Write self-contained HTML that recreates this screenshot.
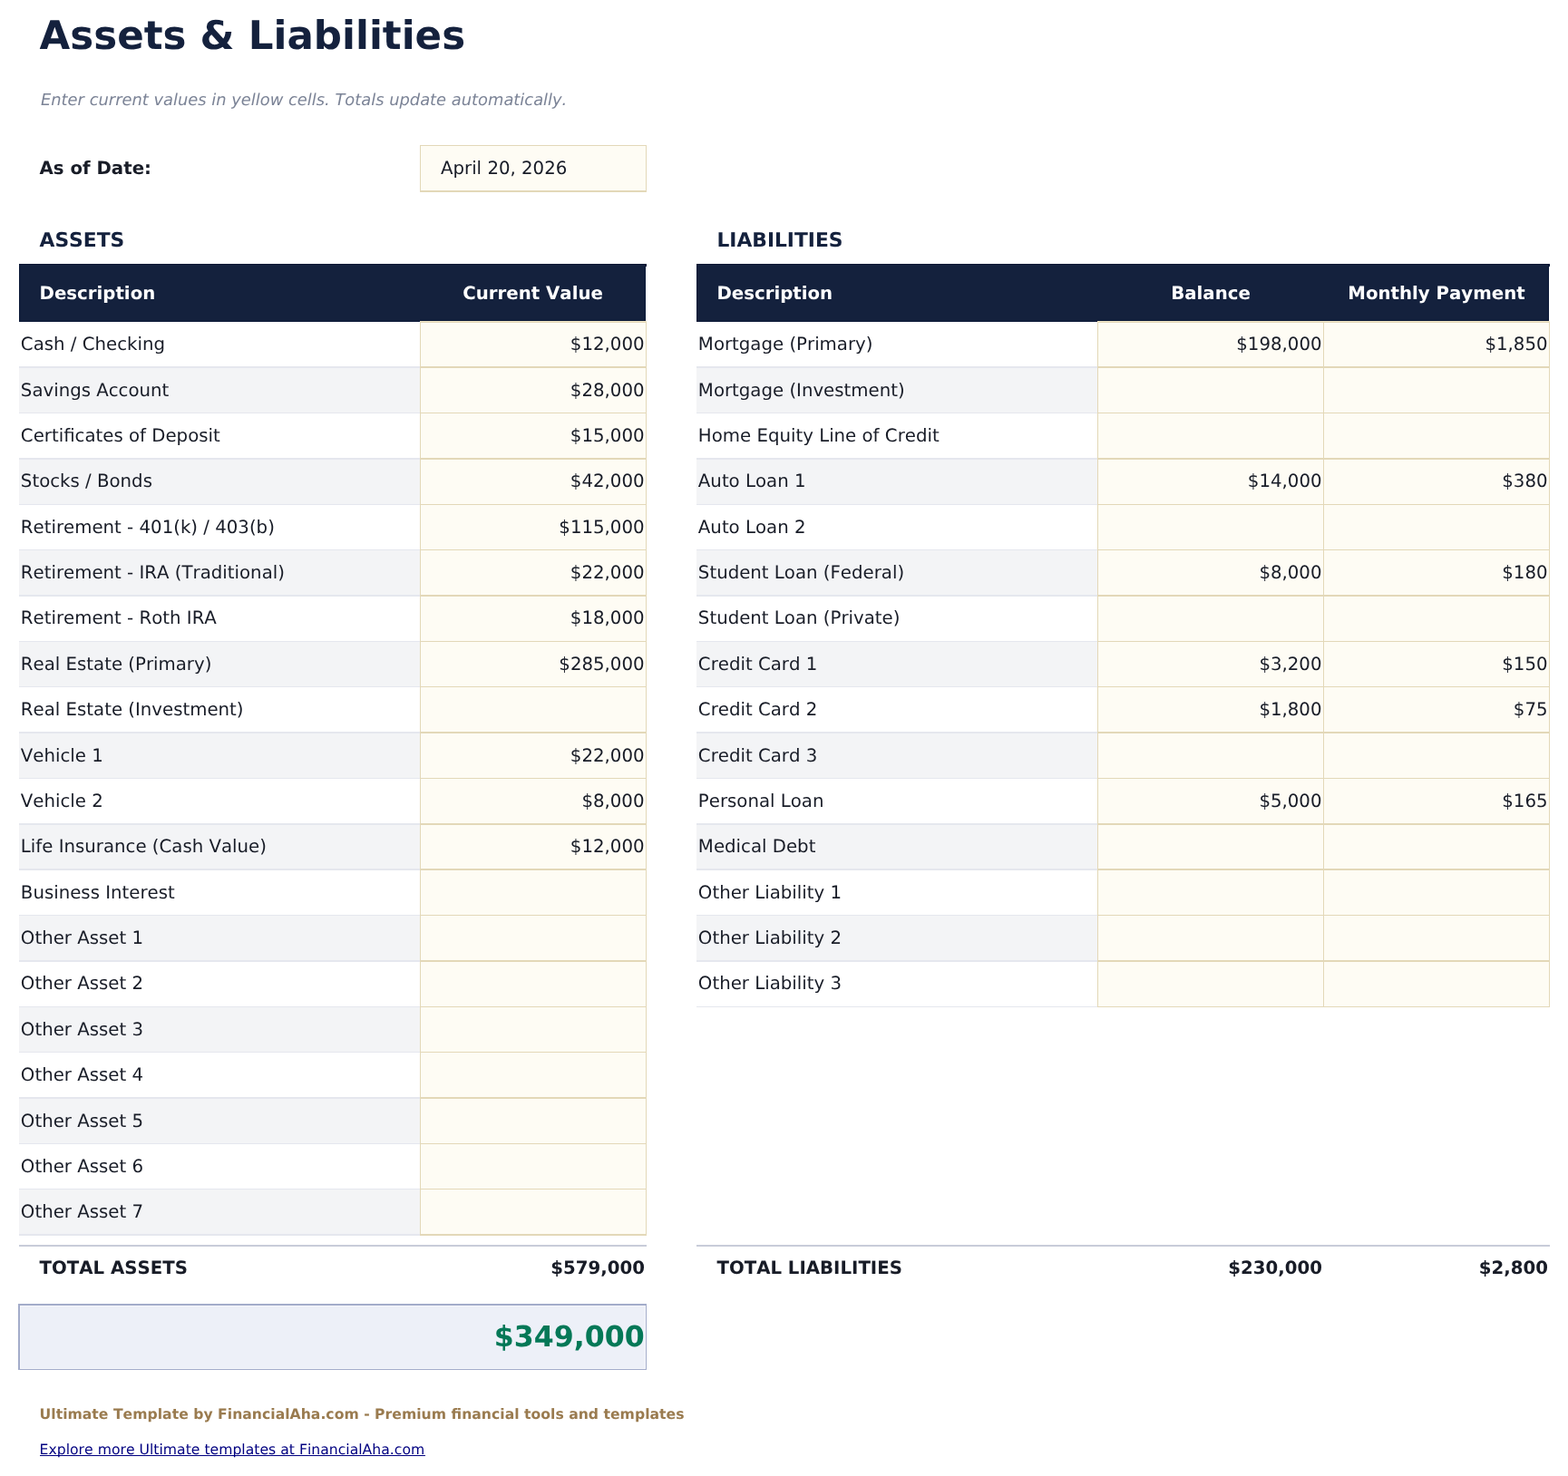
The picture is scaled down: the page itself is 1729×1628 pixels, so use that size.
<!DOCTYPE html>
<html lang="en"><head><meta charset="utf-8"><title>Assets &amp; Liabilities</title>
<style>
html,body{margin:0;padding:0;background:#fff;overflow:hidden;}
body{width:1729px;height:1628px;position:relative;overflow:hidden;}
#g{position:absolute;left:0;top:0;width:1729px;height:1628px;}
#g i{position:absolute;display:block;}
#t{position:absolute;left:0;top:0;width:1270px;height:1190px;transform:scale(1.36142);transform-origin:0 0;
font-family:"DejaVu Sans","Liberation Sans",sans-serif;font-kerning:none;text-rendering:geometricPrecision;will-change:transform;color:#181c27;}
#t div{position:absolute;white-space:nowrap;line-height:20px;height:20px;}
#t .b{font-weight:bold;}
#t .it{font-style:italic;}
#t a{color:#000080;text-decoration:none;}
</style></head><body>
<div id="g">
<i style="left:21px;top:291px;width:691px;height:64px;background:#0a1836"></i>
<i style="left:22px;top:292px;width:689px;height:62px;background:#14213d"></i>
<i style="left:463px;top:353px;width:249px;height:1px;background:#0a1836"></i>
<i style="left:712px;top:291px;width:1px;height:3px;background:#0a1836"></i>
<i style="left:463px;top:354px;width:250px;height:1px;background:#efe5c6"></i>
<i style="left:768px;top:291px;width:940px;height:64px;background:#0a1836"></i>
<i style="left:769px;top:292px;width:938px;height:62px;background:#14213d"></i>
<i style="left:1210px;top:353px;width:498px;height:1px;background:#0a1836"></i>
<i style="left:1708px;top:291px;width:1px;height:3px;background:#0a1836"></i>
<i style="left:1210px;top:354px;width:499px;height:1px;background:#efe5c6"></i>
<i style="left:21px;top:404px;width:442px;height:2px;background:#e5e7ee"></i>
<i style="left:21px;top:406px;width:442px;height:49px;background:#f3f4f6"></i>
<i style="left:21px;top:455px;width:442px;height:1px;background:#e5e7ee"></i>
<i style="left:21px;top:505px;width:442px;height:2px;background:#e5e7ee"></i>
<i style="left:21px;top:507px;width:442px;height:49px;background:#f3f4f6"></i>
<i style="left:21px;top:556px;width:442px;height:1px;background:#e5e7ee"></i>
<i style="left:21px;top:606px;width:442px;height:1px;background:#e5e7ee"></i>
<i style="left:21px;top:607px;width:442px;height:49px;background:#f3f4f6"></i>
<i style="left:21px;top:656px;width:442px;height:2px;background:#e5e7ee"></i>
<i style="left:21px;top:707px;width:442px;height:1px;background:#e5e7ee"></i>
<i style="left:21px;top:708px;width:442px;height:49px;background:#f3f4f6"></i>
<i style="left:21px;top:757px;width:442px;height:1px;background:#e5e7ee"></i>
<i style="left:21px;top:807px;width:442px;height:2px;background:#e5e7ee"></i>
<i style="left:21px;top:809px;width:442px;height:49px;background:#f3f4f6"></i>
<i style="left:21px;top:858px;width:442px;height:1px;background:#e5e7ee"></i>
<i style="left:21px;top:908px;width:442px;height:2px;background:#e5e7ee"></i>
<i style="left:21px;top:910px;width:442px;height:48px;background:#f3f4f6"></i>
<i style="left:21px;top:958px;width:442px;height:2px;background:#e5e7ee"></i>
<i style="left:21px;top:1009px;width:442px;height:1px;background:#e5e7ee"></i>
<i style="left:21px;top:1010px;width:442px;height:49px;background:#f3f4f6"></i>
<i style="left:21px;top:1059px;width:442px;height:2px;background:#e5e7ee"></i>
<i style="left:21px;top:1110px;width:442px;height:1px;background:#e5e7ee"></i>
<i style="left:21px;top:1111px;width:442px;height:49px;background:#f3f4f6"></i>
<i style="left:21px;top:1160px;width:442px;height:1px;background:#e5e7ee"></i>
<i style="left:21px;top:1210px;width:442px;height:2px;background:#e5e7ee"></i>
<i style="left:21px;top:1212px;width:442px;height:49px;background:#f3f4f6"></i>
<i style="left:21px;top:1261px;width:442px;height:1px;background:#e5e7ee"></i>
<i style="left:21px;top:1311px;width:442px;height:1px;background:#e5e7ee"></i>
<i style="left:21px;top:1312px;width:442px;height:49px;background:#f3f4f6"></i>
<i style="left:21px;top:1361px;width:442px;height:2px;background:#e5e7ee"></i>
<i style="left:463px;top:355px;width:250px;height:1008px;background:#e3d8b8"></i>
<i style="left:464px;top:356px;width:248px;height:48px;background:#fefcf4"></i>
<i style="left:464px;top:406px;width:248px;height:49px;background:#fefcf4"></i>
<i style="left:464px;top:456px;width:248px;height:49px;background:#fefcf4"></i>
<i style="left:464px;top:507px;width:248px;height:49px;background:#fefcf4"></i>
<i style="left:464px;top:557px;width:248px;height:49px;background:#fefcf4"></i>
<i style="left:464px;top:607px;width:248px;height:49px;background:#fefcf4"></i>
<i style="left:464px;top:658px;width:248px;height:49px;background:#fefcf4"></i>
<i style="left:464px;top:708px;width:248px;height:49px;background:#fefcf4"></i>
<i style="left:464px;top:758px;width:248px;height:49px;background:#fefcf4"></i>
<i style="left:464px;top:809px;width:248px;height:49px;background:#fefcf4"></i>
<i style="left:464px;top:859px;width:248px;height:49px;background:#fefcf4"></i>
<i style="left:464px;top:910px;width:248px;height:48px;background:#fefcf4"></i>
<i style="left:464px;top:960px;width:248px;height:49px;background:#fefcf4"></i>
<i style="left:464px;top:1010px;width:248px;height:49px;background:#fefcf4"></i>
<i style="left:464px;top:1061px;width:248px;height:49px;background:#fefcf4"></i>
<i style="left:464px;top:1111px;width:248px;height:49px;background:#fefcf4"></i>
<i style="left:464px;top:1161px;width:248px;height:49px;background:#fefcf4"></i>
<i style="left:464px;top:1212px;width:248px;height:49px;background:#fefcf4"></i>
<i style="left:464px;top:1262px;width:248px;height:49px;background:#fefcf4"></i>
<i style="left:464px;top:1312px;width:248px;height:49px;background:#fefcf4"></i>
<i style="left:768px;top:404px;width:442px;height:2px;background:#e5e7ee"></i>
<i style="left:768px;top:406px;width:442px;height:49px;background:#f3f4f6"></i>
<i style="left:768px;top:455px;width:442px;height:1px;background:#e5e7ee"></i>
<i style="left:768px;top:505px;width:442px;height:2px;background:#e5e7ee"></i>
<i style="left:768px;top:507px;width:442px;height:49px;background:#f3f4f6"></i>
<i style="left:768px;top:556px;width:442px;height:1px;background:#e5e7ee"></i>
<i style="left:768px;top:606px;width:442px;height:1px;background:#e5e7ee"></i>
<i style="left:768px;top:607px;width:442px;height:49px;background:#f3f4f6"></i>
<i style="left:768px;top:656px;width:442px;height:2px;background:#e5e7ee"></i>
<i style="left:768px;top:707px;width:442px;height:1px;background:#e5e7ee"></i>
<i style="left:768px;top:708px;width:442px;height:49px;background:#f3f4f6"></i>
<i style="left:768px;top:757px;width:442px;height:1px;background:#e5e7ee"></i>
<i style="left:768px;top:807px;width:442px;height:2px;background:#e5e7ee"></i>
<i style="left:768px;top:809px;width:442px;height:49px;background:#f3f4f6"></i>
<i style="left:768px;top:858px;width:442px;height:1px;background:#e5e7ee"></i>
<i style="left:768px;top:908px;width:442px;height:2px;background:#e5e7ee"></i>
<i style="left:768px;top:910px;width:442px;height:48px;background:#f3f4f6"></i>
<i style="left:768px;top:958px;width:442px;height:2px;background:#e5e7ee"></i>
<i style="left:768px;top:1009px;width:442px;height:1px;background:#e5e7ee"></i>
<i style="left:768px;top:1010px;width:442px;height:49px;background:#f3f4f6"></i>
<i style="left:768px;top:1059px;width:442px;height:2px;background:#e5e7ee"></i>
<i style="left:768px;top:1110px;width:442px;height:1px;background:#e5e7ee"></i>
<i style="left:1210px;top:355px;width:250px;height:756px;background:#e3d8b8"></i>
<i style="left:1211px;top:356px;width:248px;height:48px;background:#fefcf4"></i>
<i style="left:1211px;top:406px;width:248px;height:49px;background:#fefcf4"></i>
<i style="left:1211px;top:456px;width:248px;height:49px;background:#fefcf4"></i>
<i style="left:1211px;top:507px;width:248px;height:49px;background:#fefcf4"></i>
<i style="left:1211px;top:557px;width:248px;height:49px;background:#fefcf4"></i>
<i style="left:1211px;top:607px;width:248px;height:49px;background:#fefcf4"></i>
<i style="left:1211px;top:658px;width:248px;height:49px;background:#fefcf4"></i>
<i style="left:1211px;top:708px;width:248px;height:49px;background:#fefcf4"></i>
<i style="left:1211px;top:758px;width:248px;height:49px;background:#fefcf4"></i>
<i style="left:1211px;top:809px;width:248px;height:49px;background:#fefcf4"></i>
<i style="left:1211px;top:859px;width:248px;height:49px;background:#fefcf4"></i>
<i style="left:1211px;top:910px;width:248px;height:48px;background:#fefcf4"></i>
<i style="left:1211px;top:960px;width:248px;height:49px;background:#fefcf4"></i>
<i style="left:1211px;top:1010px;width:248px;height:49px;background:#fefcf4"></i>
<i style="left:1211px;top:1061px;width:248px;height:49px;background:#fefcf4"></i>
<i style="left:1459px;top:355px;width:250px;height:756px;background:#e3d8b8"></i>
<i style="left:1460px;top:356px;width:248px;height:48px;background:#fefcf4"></i>
<i style="left:1460px;top:406px;width:248px;height:49px;background:#fefcf4"></i>
<i style="left:1460px;top:456px;width:248px;height:49px;background:#fefcf4"></i>
<i style="left:1460px;top:507px;width:248px;height:49px;background:#fefcf4"></i>
<i style="left:1460px;top:557px;width:248px;height:49px;background:#fefcf4"></i>
<i style="left:1460px;top:607px;width:248px;height:49px;background:#fefcf4"></i>
<i style="left:1460px;top:658px;width:248px;height:49px;background:#fefcf4"></i>
<i style="left:1460px;top:708px;width:248px;height:49px;background:#fefcf4"></i>
<i style="left:1460px;top:758px;width:248px;height:49px;background:#fefcf4"></i>
<i style="left:1460px;top:809px;width:248px;height:49px;background:#fefcf4"></i>
<i style="left:1460px;top:859px;width:248px;height:49px;background:#fefcf4"></i>
<i style="left:1460px;top:910px;width:248px;height:48px;background:#fefcf4"></i>
<i style="left:1460px;top:960px;width:248px;height:49px;background:#fefcf4"></i>
<i style="left:1460px;top:1010px;width:248px;height:49px;background:#fefcf4"></i>
<i style="left:1460px;top:1061px;width:248px;height:49px;background:#fefcf4"></i>
<i style="left:463px;top:160px;width:250px;height:52px;background:#e3d8b8"></i>
<i style="left:464px;top:161px;width:248px;height:49px;background:#fefcf4"></i>
<i style="left:21px;top:1373px;width:692px;height:2px;background:#c8ccd9"></i>
<i style="left:768px;top:1373px;width:941px;height:2px;background:#c8ccd9"></i>
<i style="left:20px;top:1438px;width:693px;height:73px;background:#a3acca"></i>
<i style="left:22px;top:1440px;width:690px;height:70px;background:#f5f6fb"></i>
<i style="left:23px;top:1441px;width:688px;height:68px;background:#edf0f8"></i>
<i style="left:44px;top:1605px;width:425px;height:1px;background:#000080"></i>
</div>
<div id="t">
<div class="b" style="top:18.000px;font-size:32px;transform:translateY(0.6645px);left:32.000px;color:#14213d;">Assets &amp; Liabilities</div>
<div class="it" style="top:72.000px;font-size:13.13px;transform:translateY(0.2052px);left:33.054px;color:#7b8396;">Enter current values in yellow cells. Totals update automatically.</div>
<div class="b" style="top:127.000px;font-size:14.5px;transform:translateY(0.0292px);left:32.000px;">As of Date:</div>
<div style="top:127.000px;font-size:14.5px;transform:translateY(0.0292px);left:356.980px;">April 20, 2026</div>
<div class="b" style="top:184.000px;font-size:16px;transform:translateY(0.7914px);left:32.000px;color:#14213d;">ASSETS</div>
<div class="b" style="top:184.000px;font-size:16px;transform:translateY(0.7914px);left:580.607px;color:#14213d;">LIABILITIES</div>
<div class="b" style="top:228.000px;font-size:14.5px;transform:translateY(0.3940px);left:32.000px;color:#fff;">Description</div>
<div class="b" style="top:228.000px;font-size:14.5px;transform:translateY(0.3940px);left:341.608px;width:180px;text-align:center;color:#fff;">Current Value</div>
<div class="b" style="top:228.000px;font-size:14.5px;transform:translateY(0.3940px);left:580.607px;color:#fff;">Description</div>
<div class="b" style="top:228.000px;font-size:14.5px;transform:translateY(0.3940px);left:890.594px;width:180px;text-align:center;color:#fff;">Balance</div>
<div class="b" style="top:228.000px;font-size:14.5px;transform:translateY(0.3940px);left:1073.491px;width:180px;text-align:center;color:#fff;">Monthly Payment</div>
<div style="top:269.000px;font-size:14.5px;transform:translateY(0.5275px);left:16.806px;">Cash / Checking</div>
<div style="top:269.000px;font-size:14.5px;transform:translateY(0.5275px);right:748.116px;">$12,000</div>
<div style="top:306.000px;font-size:14.5px;transform:translateY(0.9884px);left:16.806px;">Savings Account</div>
<div style="top:306.000px;font-size:14.5px;transform:translateY(0.9884px);right:748.116px;">$28,000</div>
<div style="top:343.000px;font-size:14.5px;transform:translateY(0.7147px);left:16.806px;">Certificates of Deposit</div>
<div style="top:343.000px;font-size:14.5px;transform:translateY(0.7147px);right:748.116px;">$15,000</div>
<div style="top:380.000px;font-size:14.5px;transform:translateY(0.4411px);left:16.806px;">Stocks / Bonds</div>
<div style="top:380.000px;font-size:14.5px;transform:translateY(0.4411px);right:748.116px;">$42,000</div>
<div style="top:417.000px;font-size:14.5px;transform:translateY(0.9020px);left:16.806px;">Retirement - 401(k) / 403(b)</div>
<div style="top:417.000px;font-size:14.5px;transform:translateY(0.9020px);right:748.116px;">$115,000</div>
<div style="top:454.000px;font-size:14.5px;transform:translateY(0.6283px);left:16.806px;">Retirement - IRA (Traditional)</div>
<div style="top:454.000px;font-size:14.5px;transform:translateY(0.6283px);right:748.116px;">$22,000</div>
<div style="top:491.000px;font-size:14.5px;transform:translateY(0.3547px);left:16.806px;">Retirement - Roth IRA</div>
<div style="top:491.000px;font-size:14.5px;transform:translateY(0.3547px);right:748.116px;">$18,000</div>
<div style="top:528.000px;font-size:14.5px;transform:translateY(0.8156px);left:16.806px;">Real Estate (Primary)</div>
<div style="top:528.000px;font-size:14.5px;transform:translateY(0.8156px);right:748.116px;">$285,000</div>
<div style="top:565.000px;font-size:14.5px;transform:translateY(0.5419px);left:16.806px;">Real Estate (Investment)</div>
<div style="top:603.000px;font-size:14.5px;transform:translateY(0.0028px);left:16.806px;">Vehicle 1</div>
<div style="top:603.000px;font-size:14.5px;transform:translateY(0.0028px);right:748.116px;">$22,000</div>
<div style="top:639.000px;font-size:14.5px;transform:translateY(0.7292px);left:16.806px;">Vehicle 2</div>
<div style="top:639.000px;font-size:14.5px;transform:translateY(0.7292px);right:748.116px;">$8,000</div>
<div style="top:676.000px;font-size:14.5px;transform:translateY(0.4556px);left:16.806px;">Life Insurance (Cash Value)</div>
<div style="top:676.000px;font-size:14.5px;transform:translateY(0.4556px);right:748.116px;">$12,000</div>
<div style="top:713.000px;font-size:14.5px;transform:translateY(0.9164px);left:16.806px;">Business Interest</div>
<div style="top:750.000px;font-size:14.5px;transform:translateY(0.6428px);left:16.806px;">Other Asset 1</div>
<div style="top:787.000px;font-size:14.5px;transform:translateY(0.3692px);left:16.806px;">Other Asset 2</div>
<div style="top:824.000px;font-size:14.5px;transform:translateY(0.8300px);left:16.806px;">Other Asset 3</div>
<div style="top:861.000px;font-size:14.5px;transform:translateY(0.5564px);left:16.806px;">Other Asset 4</div>
<div style="top:899.000px;font-size:14.5px;transform:translateY(0.0173px);left:16.806px;">Other Asset 5</div>
<div style="top:935.000px;font-size:14.5px;transform:translateY(0.7437px);left:16.806px;">Other Asset 6</div>
<div style="top:972.000px;font-size:14.5px;transform:translateY(0.4700px);left:16.806px;">Other Asset 7</div>
<div style="top:269.000px;font-size:14.5px;transform:translateY(0.5275px);left:565.498px;">Mortgage (Primary)</div>
<div style="top:269.000px;font-size:14.5px;transform:translateY(0.5275px);right:199.424px;">$198,000</div>
<div style="top:269.000px;font-size:14.5px;transform:translateY(0.5275px);right:16.527px;">$1,850</div>
<div style="top:306.000px;font-size:14.5px;transform:translateY(0.9884px);left:565.498px;">Mortgage (Investment)</div>
<div style="top:343.000px;font-size:14.5px;transform:translateY(0.7147px);left:565.498px;">Home Equity Line of Credit</div>
<div style="top:380.000px;font-size:14.5px;transform:translateY(0.4411px);left:565.498px;">Auto Loan 1</div>
<div style="top:380.000px;font-size:14.5px;transform:translateY(0.4411px);right:199.424px;">$14,000</div>
<div style="top:380.000px;font-size:14.5px;transform:translateY(0.4411px);right:16.527px;">$380</div>
<div style="top:417.000px;font-size:14.5px;transform:translateY(0.9020px);left:565.498px;">Auto Loan 2</div>
<div style="top:454.000px;font-size:14.5px;transform:translateY(0.6283px);left:565.498px;">Student Loan (Federal)</div>
<div style="top:454.000px;font-size:14.5px;transform:translateY(0.6283px);right:199.424px;">$8,000</div>
<div style="top:454.000px;font-size:14.5px;transform:translateY(0.6283px);right:16.527px;">$180</div>
<div style="top:491.000px;font-size:14.5px;transform:translateY(0.3547px);left:565.498px;">Student Loan (Private)</div>
<div style="top:528.000px;font-size:14.5px;transform:translateY(0.8156px);left:565.498px;">Credit Card 1</div>
<div style="top:528.000px;font-size:14.5px;transform:translateY(0.8156px);right:199.424px;">$3,200</div>
<div style="top:528.000px;font-size:14.5px;transform:translateY(0.8156px);right:16.527px;">$150</div>
<div style="top:565.000px;font-size:14.5px;transform:translateY(0.5419px);left:565.498px;">Credit Card 2</div>
<div style="top:565.000px;font-size:14.5px;transform:translateY(0.5419px);right:199.424px;">$1,800</div>
<div style="top:565.000px;font-size:14.5px;transform:translateY(0.5419px);right:16.527px;">$75</div>
<div style="top:603.000px;font-size:14.5px;transform:translateY(0.0028px);left:565.498px;">Credit Card 3</div>
<div style="top:639.000px;font-size:14.5px;transform:translateY(0.7292px);left:565.498px;">Personal Loan</div>
<div style="top:639.000px;font-size:14.5px;transform:translateY(0.7292px);right:199.424px;">$5,000</div>
<div style="top:639.000px;font-size:14.5px;transform:translateY(0.7292px);right:16.527px;">$165</div>
<div style="top:676.000px;font-size:14.5px;transform:translateY(0.4556px);left:565.498px;">Medical Debt</div>
<div style="top:713.000px;font-size:14.5px;transform:translateY(0.9164px);left:565.498px;">Other Liability 1</div>
<div style="top:750.000px;font-size:14.5px;transform:translateY(0.6428px);left:565.498px;">Other Liability 2</div>
<div style="top:787.000px;font-size:14.5px;transform:translateY(0.3692px);left:565.498px;">Other Liability 3</div>
<div class="b" style="top:1018.000px;font-size:14.5px;transform:translateY(0.0107px);left:32.000px;">TOTAL ASSETS</div>
<div class="b" style="top:1018.000px;font-size:14.5px;transform:translateY(0.0107px);right:747.749px;">$579,000</div>
<div class="b" style="top:1018.000px;font-size:14.5px;transform:translateY(0.0107px);left:580.607px;">TOTAL LIABILITIES</div>
<div class="b" style="top:1018.000px;font-size:14.5px;transform:translateY(0.0107px);right:199.057px;">$230,000</div>
<div class="b" style="top:1018.000px;font-size:14.5px;transform:translateY(0.0107px);right:16.160px;">$2,800</div>
<div class="b" style="top:1073.000px;font-size:23.2px;transform:translateY(0.7729px);right:748.042px;color:#047857;">$349,000</div>
<div class="b" style="top:1135.000px;font-size:11.5px;transform:translateY(0.5350px);left:32.000px;color:#9a7b4f;">Ultimate Template by FinancialAha.com - Premium financial tools and templates</div>
<div style="top:1164.000px;font-size:11.5px;transform:translateY(0.1816px);left:32.000px;"><a href="#">Explore more Ultimate templates at FinancialAha.com</a></div>
</div>
</body></html>
